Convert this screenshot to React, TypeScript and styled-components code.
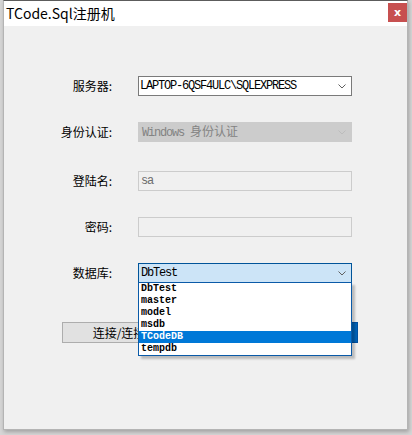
import React from 'react';
import styled, { createGlobalStyle } from 'styled-components';

const GlobalStyle = createGlobalStyle`
    html, body {
        margin: 0;
        padding: 0;
        background: #d6d6d6;
    }
    body {
        font-family: "Noto Sans CJK SC", "Noto Sans", sans-serif;
    }
`

const Desktop = styled.div`
    width: 412px;
    height: 435px;
    padding-left: 3px;
    box-sizing: border-box;
    overflow: hidden;
`

const Window = styled.div`
    width: 405px;
    height: 430px;
    box-sizing: border-box;
    display: flex;
    flex-direction: column;
    background: #f0f0f0;
    border: 1px solid #b4b4b4;
    border-top-color: #5c5c5c;
    box-shadow: 1px 2px 4px rgba(0, 0, 0, 0.25);
`

const TitleBar = styled.div`
    height: 25px;
    flex: none;
    display: flex;
    align-items: flex-start;
    justify-content: space-between;
    background: #ffffff;
    h1 {
        margin: 0;
        padding: 3px 0 0 2px;
        font-size: 14px;
        font-weight: normal;
        line-height: 18px;
        color: #000;
    }
`

const CloseButton = styled.div`
    width: 19px;
    height: 19px;
    margin-top: 2px;
    display: grid;
    place-items: center;
    background: #c75050;
    color: #fff;
    font-family: "DejaVu Sans", sans-serif;
    font-weight: bold;
    font-size: 11px;
    line-height: 1;
`

const Body = styled.div`
    flex: 1;
    padding-top: 50px;
    display: flex;
    flex-direction: column;
`

const Row = styled.div<{ $gap: number }>`
    margin-top: ${p => p.$gap}px;
    display: grid;
    grid-template-columns: 108px 214px;
    column-gap: 26px;
    align-items: center;
`

const Label = styled.div`
    text-align: right;
    font-size: 12px;
    line-height: 16px;
    color: #000;
`

const Combo = styled.div<{ $variant: 'normal' | 'disabled' | 'focused' }>`
    position: relative;
    height: 20px;
    box-sizing: border-box;
    display: flex;
    align-items: center;
    justify-content: space-between;
    padding: 0 5px 0 1px;
    border: 1px solid ${p => p.$variant === 'normal' ? '#7a7a7a' : p.$variant === 'focused' ? '#005499' : '#cccccc'};
    background: ${p => p.$variant === 'normal' ? '#ffffff' : p.$variant === 'focused' ? '#cce4f7' : '#cccccc'};
    color: ${p => p.$variant === 'disabled' ? '#838383' : '#000000'};
    svg {
        stroke: ${p => p.$variant === 'disabled' ? '#bcbcbc' : '#606060'};
    }
`

const MonoText = styled.span<{ $shift?: number }>`
    font-family: "Liberation Mono", "Noto Sans CJK SC", monospace;
    font-size: 12px;
    letter-spacing: -1.2px;
    line-height: 14px;
    padding-left: ${p => p.$shift || 0}px;
    white-space: nowrap;
`

const CjkInField = styled.span`
    font-family: "Noto Sans CJK SC", sans-serif;
    font-size: 12px;
    letter-spacing: 0;
`

const TextBox = styled.div`
    height: 20px;
    box-sizing: border-box;
    display: flex;
    align-items: center;
    padding-left: 2px;
    border: 1px solid #cccccc;
    background: #f0f0f0;
    color: #6d6d6d;
`

const DropList = styled.ul`
    position: absolute;
    top: 100%;
    left: -1px;
    width: 214px;
    box-sizing: border-box;
    margin: 0;
    padding: 0;
    list-style: none;
    background: #ffffff;
    border: 1px solid #0a5aa8;
    box-shadow: 3px 3px 2px rgba(0, 0, 0, 0.22);
    z-index: 2;
`

const DropItem = styled.li<{ $selected?: boolean }>`
    height: 12px;
    display: flex;
    align-items: center;
    padding-left: 2px;
    background: ${p => p.$selected ? '#0078d7' : 'transparent'};
    color: ${p => p.$selected ? '#ffffff' : '#000000'};
    font-family: "Liberation Mono", monospace;
    font-size: 10px;
    font-weight: bold;
    line-height: 12px;
`

const ButtonRow = styled.div`
    margin-top: 39px;
    padding-left: 58px;
    display: flex;
    gap: 20px;
`

const Button = styled.button<{ $primary?: boolean }>`
    width: 138px;
    height: 21px;
    padding: 0;
    box-sizing: border-box;
    font-family: "Noto Sans CJK SC", sans-serif;
    font-size: 12px;
    color: ${p => p.$primary ? '#ffffff' : '#000000'};
    background: ${p => p.$primary ? '#0063b8' : '#e1e1e1'};
    border: 1px solid ${p => p.$primary ? '#0050a0' : '#adadad'};
`

function Chevron() {
    return (
        <svg width="8" height="5" viewBox="0 0 8 5" fill="none" strokeWidth="1">
            <polyline points="0.5,0.5 4,4 7.5,0.5" />
        </svg>
    )
}

const databases = ['DbTest', 'master', 'model', 'msdb', 'TCodeDB', 'tempdb']

export default function App() {
    return (
        <Desktop>
            <GlobalStyle />
            <Window>
                <TitleBar>
                    <h1>TCode.Sql注册机</h1>
                    <CloseButton>x</CloseButton>
                </TitleBar>
                <Body>
                    <Row $gap={0}>
                        <Label>服务器:</Label>
                        <Combo $variant="normal">
                            <MonoText>LAPTOP-6QSF4ULC\SQLEXPRESS</MonoText>
                            <Chevron />
                        </Combo>
                    </Row>
                    <Row $gap={26}>
                        <Label>身份认证:</Label>
                        <Combo $variant="disabled">
                            <MonoText $shift={2}>Windows <CjkInField>身份认证</CjkInField></MonoText>
                            <Chevron />
                        </Combo>
                    </Row>
                    <Row $gap={29}>
                        <Label>登陆名:</Label>
                        <TextBox>
                            <MonoText>sa</MonoText>
                        </TextBox>
                    </Row>
                    <Row $gap={26}>
                        <Label>密码:</Label>
                        <TextBox />
                    </Row>
                    <Row $gap={26}>
                        <Label>数据库:</Label>
                        <Combo $variant="focused">
                            <MonoText $shift={1}>DbTest</MonoText>
                            <Chevron />
                            <DropList>
                                {databases.map(db => (
                                    <DropItem key={db} $selected={db === 'TCodeDB'}>{db}</DropItem>
                                ))}
                            </DropList>
                        </Combo>
                    </Row>
                    <ButtonRow>
                        <Button>连接/连接测试</Button>
                        <Button $primary>注册</Button>
                    </ButtonRow>
                </Body>
            </Window>
        </Desktop>
    )
}
